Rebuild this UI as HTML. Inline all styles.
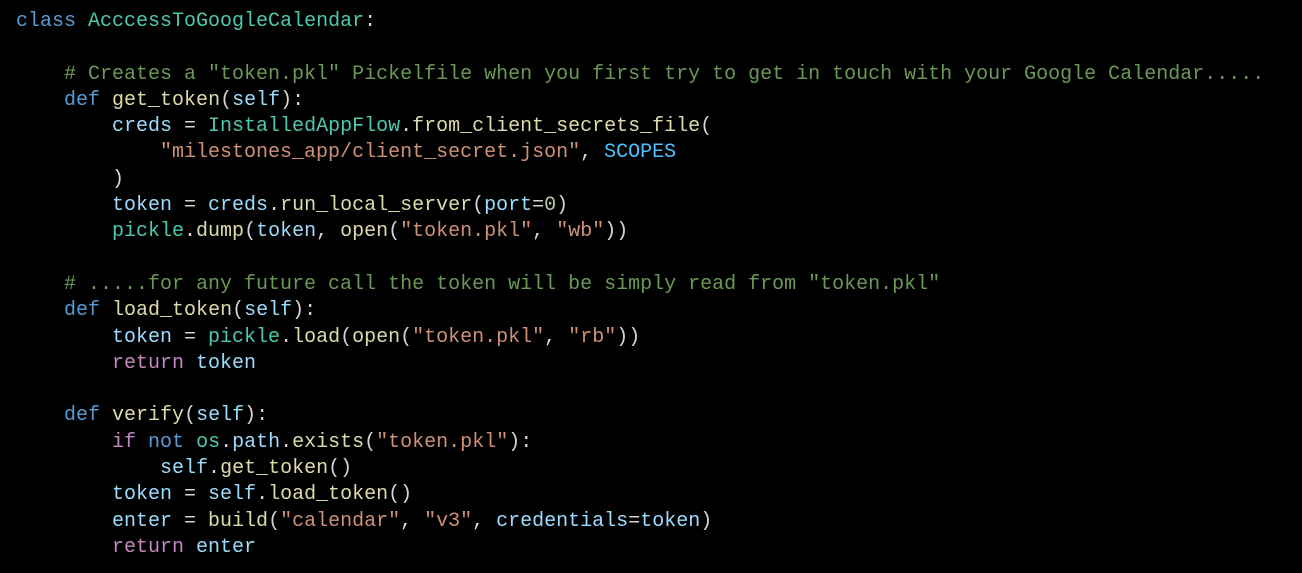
<!DOCTYPE html>
<html><head><meta charset="utf-8"><style>
html,body{margin:0;padding:0;background:#000;width:1302px;height:573px;overflow:hidden}
pre{margin:0;padding:9px 0 0 16px;font-family:"Liberation Mono",monospace;font-size:20px;line-height:26.3px;color:#d4d4d4;white-space:pre}
.k{color:#569cd6}.c{color:#4ec9b0}.f{color:#dcdcaa}.v{color:#9cdcfe}.s{color:#ce9178}.m{color:#6a9955}.p{color:#c586c0}.n{color:#b5cea8}.o{color:#4fc1ff}
</style></head><body><pre><span class="k">class</span> <span class="c">AcccessToGoogleCalendar</span>:

    <span class="m"># Creates a "token.pkl" Pickelfile when you first try to get in touch with your Google Calendar.....</span>
    <span class="k">def</span> <span class="f">get_token</span>(<span class="v">self</span>):
        <span class="v">creds</span> = <span class="c">InstalledAppFlow</span>.<span class="f">from_client_secrets_file</span>(
            <span class="s">"milestones_app/client_secret.json"</span>, <span class="o">SCOPES</span>
        )
        <span class="v">token</span> = <span class="v">creds</span>.<span class="f">run_local_server</span>(<span class="v">port</span>=<span class="n">0</span>)
        <span class="c">pickle</span>.<span class="f">dump</span>(<span class="v">token</span>, <span class="f">open</span>(<span class="s">"token.pkl"</span>, <span class="s">"wb"</span>))

    <span class="m"># .....for any future call the token will be simply read from "token.pkl"</span>
    <span class="k">def</span> <span class="f">load_token</span>(<span class="v">self</span>):
        <span class="v">token</span> = <span class="c">pickle</span>.<span class="f">load</span>(<span class="f">open</span>(<span class="s">"token.pkl"</span>, <span class="s">"rb"</span>))
        <span class="p">return</span> <span class="v">token</span>

    <span class="k">def</span> <span class="f">verify</span>(<span class="v">self</span>):
        <span class="p">if</span> <span class="k">not</span> <span class="c">os</span>.<span class="v">path</span>.<span class="f">exists</span>(<span class="s">"token.pkl"</span>):
            <span class="v">self</span>.<span class="f">get_token</span>()
        <span class="v">token</span> = <span class="v">self</span>.<span class="f">load_token</span>()
        <span class="v">enter</span> = <span class="f">build</span>(<span class="s">"calendar"</span>, <span class="s">"v3"</span>, <span class="v">credentials</span>=<span class="v">token</span>)
        <span class="p">return</span> <span class="v">enter</span></pre></body></html>
